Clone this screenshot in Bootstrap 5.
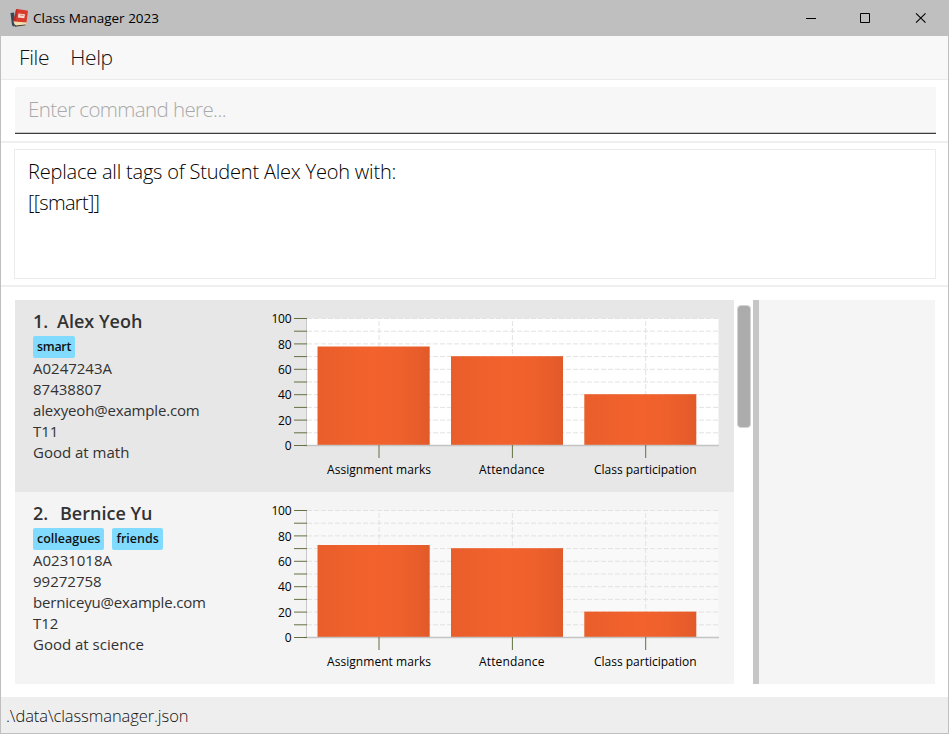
<!DOCTYPE html>
<html lang="en">
<head>
<meta charset="utf-8">
<title>Class Manager 2023</title>
<link href="https://cdn.jsdelivr.net/npm/bootstrap@5.3.0/dist/css/bootstrap.min.css" rel="stylesheet">
<style>
body{font-family:"Open Sans","Noto Sans",sans-serif;color:#323232;background:#fff}
.window{width:949px;height:734px;border:1px solid #bfbfbf;border-top:0}
.titlebar{height:36px;background:#bfbfbf;color:#000;padding-left:8px}
.titlebar .caption{font-size:13.5px;line-height:36px;margin-left:4px}
.winbtn{width:55px;height:36px}
.menubar{height:44px;background:#f8f8f8;border-bottom:1px solid #ebebeb;padding-left:18px;gap:21px;font-size:21px;letter-spacing:-.35px;font-weight:300;line-height:42px;color:#111}
.command-pane{height:61px;padding:7px 12px 0 14px}
.command-input{height:47px;background:#f7f7f7;border:0;border-bottom:1px solid #3c3c3c;box-shadow:inset 0 -1px #c8c8c8;border-radius:0;padding:0 13px 2px;font-size:20.5px;letter-spacing:-.6px;font-weight:300;line-height:44px}
.command-input::placeholder{color:#a9a9a9;opacity:1}
.result-pane{height:146px;border-top:2px solid #efefef;border-bottom:2px solid #efefef;padding:6px 12px 0 13px}
.result-box{height:130px;border:1px solid #ececec;padding:6px 13px;font-size:20px;letter-spacing:-.2px;font-weight:300;line-height:31px;color:#000}
.result-box .tag-value{letter-spacing:-.7px}
.main-pane{height:410px;padding:13px 13px 13px 14px}
.student-list{width:719px}
.student{height:192px;background:#f4f4f4}
.student.selected{background:#e7e7e7}
.details{width:238px;padding:9px 0 0 18px;font-size:15px;line-height:21px}
.student-name{height:25px;font-size:18px;font-weight:600;line-height:25px}
.student-name .idx{width:27px}
.selected .student-name .idx{width:24px}
.email{letter-spacing:-.17px}
.tags{height:24px;padding-top:2px;gap:8px}
.tag{height:22px;background:#81dbff;border-radius:2px;color:#111;font-size:12.5px;font-weight:600;line-height:21px;padding:0 4px}
.selected .tag{letter-spacing:-.3px}
.scroll-track{width:19px;padding:5px 2px 0 3px}
.scroll-thumb{height:123px;background:#acacac;border:1px solid #d4d4d4;border-radius:4px}
.splitter{width:6px;background:#c6c6c6}
.side-panel{background:#f5f5f5}
.statusbar{height:36px;background:#eee;padding-left:5px;font-size:16.5px;letter-spacing:-.08px;font-weight:300;line-height:38px;color:#111}
svg text{font-size:12px;fill:#000}
</style>
<script src="https://cdn.jsdelivr.net/npm/bootstrap@5.3.0/dist/js/bootstrap.bundle.min.js"></script>
</head>
<body class="overflow-hidden">
<svg width="0" height="0" class="position-absolute" aria-hidden="true">
<defs>
<linearGradient id="barFill"><stop offset="0" stop-color="#e95e2b"/><stop offset=".5" stop-color="#f3622d"/><stop offset=".75" stop-color="#ee602c"/><stop offset="1" stop-color="#e25a29"/></linearGradient>
<symbol id="grid" viewBox="0 0 480 192" overflow="visible">
<path d="M54 18.5H465M54 31.2H465M54 43.9H465M54 56.6H465M54 69.3H465M54 82H465M54 94.7H465M54 107.4H465M54 120.1H465M54 132.8H465M126 145V18M259.4 145V18M392.7 145V18" stroke="#e2e2e2" stroke-dasharray="5 2" fill="none"/>
</symbol>
<symbol id="axes" viewBox="0 0 480 192" overflow="visible">
<path d="M53.5 18V145" stroke="#c8c8c8"/>
<path d="M51 145.6H466" stroke="#c4c4c4" stroke-width="1.5"/>
<path d="M41 18.5H54M41 31.2H54M41 43.9H54M41 56.6H54M41 69.3H54M41 82H54M41 94.7H54M41 107.4H54M41 120.1H54M41 132.8H54M41 145.5H54M126 145V158M259.4 145V158M392.7 145V158" stroke="#637040" fill="none"/>
<g text-anchor="end"><text x="38.500" y="23" textLength="20">100</text><text x="38.500" y="48.500" textLength="13.500">80</text><text x="38.500" y="74" textLength="13.500">60</text><text x="38.500" y="99" textLength="13.500">40</text><text x="38.500" y="124.500" textLength="13.500">20</text><text x="38.500" y="150">0</text></g>
<text x="74" y="174" textLength="104">Assignment marks</text><text x="226" y="174" textLength="65.500">Attendance</text><text x="341" y="174" textLength="102.500">Class participation</text>
</symbol>
</defs>
</svg>
<div class="window d-flex flex-column">
  <header class="titlebar d-flex align-items-start">
    <svg width="20" height="36" viewBox="0 0 20 36"><path d="M1.500 13L5 12.500 7 25.500 4.500 26.500Q3 26 2.800 24Z" fill="#34495e"/><path d="M4.500 21L6 26.500 16.500 25 18 21.500Z" fill="#f3dfae"/><path d="M5 24L6 26.700 16.500 25.300V24.500L7 25.500Z" fill="#34302d"/><path d="M7 9.500Q7 9 8 9L18 10.500Q19 10.700 18.900 11.500L17.500 22.500 5.500 21.500Q4.500 21.300 4.700 20.500Z" fill="#d93a2c"/><path d="M7 9.500L5 20.500 7 20.500 8.500 9.300Z" fill="#b92d27"/><path d="M9.500 13.500L16 14.300 15.300 18.300 8.800 17.500Z" fill="#f5dad2"/><path d="M11 15L14.500 15.500" stroke="#d98272"/></svg>
    <span class="caption">Class Manager 2023</span>
    <div class="d-flex ms-auto">
      <svg class="winbtn" viewBox="0 0 55 36"><path d="M23 18.500H33" stroke="#000"/></svg>
      <svg class="winbtn" viewBox="0 0 55 36"><path d="M22.500 13.500H31.500V22.500H22.500Z" stroke="#000" fill="none"/></svg>
      <svg class="winbtn" viewBox="0 0 55 36"><path d="M23 13.300L32.500 22.700M32.500 13.300L23 22.700" stroke="#000" stroke-width="1.100"/></svg>
    </div>
  </header>
  <nav class="menubar d-flex"><span>File</span><span>Help</span></nav>
  <div class="command-pane"><input class="command-input d-block w-100" placeholder="Enter command here..."></div>
  <div class="result-pane"><div class="result-box"><div>Replace all tags of Student Alex Yeoh with:</div><div class="tag-value">[[smart]]</div></div></div>
  <main class="main-pane d-flex">
    <div class="student-list">
      <section class="student selected d-flex">
        <div class="details">
          <div class="student-name d-flex"><span class="idx">1.</span><span>Alex Yeoh</span></div>
          <div class="tags d-flex"><span class="tag">smart</span></div>
          <div>A0247243A</div><div>87438807</div><div class="email">alexyeoh@example.com</div><div>T11</div><div>Good at math</div>
        </div>
        <svg width="480" height="192" viewBox="0 0 480 192"><path d="M54 18.500H465.500V145H54Z" fill="#fff"/><use href="#grid"/><g fill="url(#barFill)"><rect x="64.500" y="46.500" width="112.200" height="98.500"/><rect x="198" y="56.200" width="112" height="88.800"/><rect x="331.300" y="94.200" width="112" height="50.800"/></g><use href="#axes"/></svg>
      </section>
      <section class="student d-flex">
        <div class="details">
          <div class="student-name d-flex"><span class="idx">2.</span><span>Bernice Yu</span></div>
          <div class="tags d-flex"><span class="tag">colleagues</span><span class="tag">friends</span></div>
          <div>A0231018A</div><div>99272758</div><div class="email">berniceyu@example.com</div><div>T12</div><div>Good at science</div>
        </div>
        <svg width="480" height="192" viewBox="0 0 480 192"><path d="M54 18.500H465.500V145H54Z" fill="#f9f9f9"/><use href="#grid"/><g fill="url(#barFill)"><rect x="64.500" y="53" width="112.200" height="92"/><rect x="198" y="56.200" width="112" height="88.800"/><rect x="331.300" y="119.600" width="112" height="25.400"/></g><use href="#axes"/></svg>
      </section>
    </div>
    <div class="scroll-track"><div class="scroll-thumb"></div></div>
    <div class="splitter"></div>
    <aside class="side-panel flex-grow-1"></aside>
  </main>
  <footer class="statusbar">.\data\classmanager.json</footer>
</div>
</body>
</html>
